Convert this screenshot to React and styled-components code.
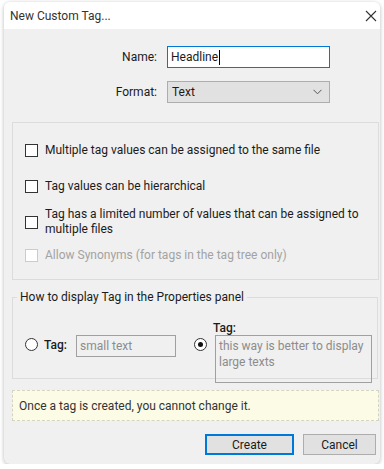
import React from 'react'
import styled, { createGlobalStyle } from 'styled-components'

const GlobalStyle = createGlobalStyle`
  html, body {
    margin: 0;
    background: #ffffff;
  }
  body {
    font-family: Roboto, "Noto Sans", sans-serif;
    font-size: 12px;
    color: #1b1b1b;
  }
`

const Dialog = styled.div`
  width: 376px;
  margin: 2px 0 0 4px;
  border-radius: 6px;
  overflow: hidden;
  background: #f0f0f0;
  box-shadow: 0 1px 4px rgba(0, 0, 0, 0.28);
`

const TitleBar = styled.div`
  height: 27px;
  display: flex;
  align-items: center;
  justify-content: space-between;
  padding: 0 3px 0 6px;
  background: #ffffff;
  color: #333;
`

const Body = styled.div`
  padding: 17px 1px 9px 8px;
`

const FormGrid = styled.div`
  display: grid;
  grid-template-columns: 145px 163px;
  column-gap: 10px;
  row-gap: 13px;
  align-items: center;
`

const Label = styled.label`
  text-align: right;
`

const TextInput = styled.div`
  height: 22px;
  box-sizing: border-box;
  border: 1px solid #0078d7;
  background: #fff;
  display: flex;
  align-items: center;
  padding-left: 3px;
`

const Caret = styled.span`
  display: inline-block;
  width: 1px;
  height: 15px;
  background: #000;
  margin-left: 1px;
`

const Select = styled.div`
  height: 22px;
  box-sizing: border-box;
  border: 1px solid #adadad;
  background: #e1e1e1;
  display: flex;
  align-items: center;
  justify-content: space-between;
  padding: 0 7px 0 4px;
`

const Group = styled.div`
  margin-top: 19px;
  border: 1px solid #dcdcdc;
  padding: 20px 10px 16px 12px;
`

const CheckRow = styled.div`
  display: flex;
  align-items: center;
  gap: 7px;
  line-height: 15px;
  margin-top: ${p => p.$gap || 0}px;
  color: ${p => (p.$disabled ? '#a3a3a3' : '#1b1b1b')};
`

const Box = styled.span`
  flex: none;
  width: 13px;
  height: 13px;
  box-sizing: border-box;
  border: 1px solid ${p => (p.$disabled ? '#cccccc' : '#333333')};
  background: #fff;
`

const Fieldset = styled.fieldset`
  margin: 10px 1px 0 0;
  border: 1px solid #dcdcdc;
  padding: 16px 6px 0 12px;
  min-width: 0;
`

const Legend = styled.legend`
  padding: 0 3px;
  margin-left: -8px;
  line-height: 15px;
`

const OptionsRow = styled.div`
  height: 57px;
  display: flex;
  align-items: flex-start;
`

const Option = styled.div`
  display: flex;
  align-items: flex-start;
  padding-top: ${p => p.$top}px;
  margin-right: ${p => p.$right || 0}px;
`

const Radio = styled.span`
  flex: none;
  width: 13px;
  height: 13px;
  box-sizing: border-box;
  border: 1px solid #333;
  border-radius: 50%;
  background: #fff;
  display: flex;
  align-items: center;
  justify-content: center;
  margin-top: ${p => p.$top || 3}px;
  &::after {
    content: '';
    display: ${p => (p.$checked ? 'block' : 'none')};
    width: 5px;
    height: 5px;
    border-radius: 50%;
    background: #111;
  }
`

const TagLabel = styled.span`
  font-weight: 500;
  margin: ${p => p.$margin};
  line-height: ${p => p.$lh || 20}px;
`

const Stack = styled.div`
  display: flex;
  flex-direction: column;
  margin-left: 8px;
`

const ReadBox = styled.div`
  box-sizing: border-box;
  width: ${p => p.$w}px;
  height: ${p => p.$h}px;
  border: 1px solid #a0a0a0;
  color: #8c8c8c;
  padding: 2px 3px;
  line-height: 16px;
`

const Note = styled.div`
  margin-top: 11px;
  height: 31px;
  box-sizing: border-box;
  border: 1px dashed #d4d4c4;
  background: #fbfbe6;
  display: flex;
  align-items: center;
  padding-left: 6px;
  color: #333;
`

const Buttons = styled.div`
  display: flex;
  justify-content: flex-end;
  gap: 9px;
  margin: 13px 3px 0 0;
`

const Button = styled.button`
  font: inherit;
  color: #1b1b1b;
  height: 21px;
  width: ${p => p.$w}px;
  padding: 0;
  box-sizing: border-box;
  background: #e1e1e1;
  border: ${p => (p.$primary ? '2px solid #0078d7' : '1px solid #adadad')};
`

export default function App() {
  return (
    <>
      <GlobalStyle />
      <Dialog>
        <TitleBar>
          <span>New Custom Tag...</span>
          <svg width="12" height="12" viewBox="0 0 12 12">
            <path d="M1 1 L11 11 M11 1 L1 11" stroke="#333" strokeWidth="1.1" fill="none" />
          </svg>
        </TitleBar>
        <Body>
          <FormGrid>
            <Label>Name:</Label>
            <TextInput>Headline<Caret /></TextInput>
            <Label>Format:</Label>
            <Select>
              <span>Text</span>
              <svg width="9" height="6" viewBox="0 0 9 6">
                <path d="M0.5 0.8 L4.5 4.8 L8.5 0.8" stroke="#555" strokeWidth="1" fill="none" />
              </svg>
            </Select>
          </FormGrid>

          <Group>
            <CheckRow><Box />Multiple tag values can be assigned to the same file</CheckRow>
            <CheckRow $gap={21}><Box />Tag values can be hierarchical</CheckRow>
            <CheckRow $gap={13}><Box />Tag has a limited number of values that can be assigned to multiple files</CheckRow>
            <CheckRow $gap={11} $disabled><Box $disabled />Allow Synonyms (for tags in the tag tree only)</CheckRow>
          </Group>

          <Fieldset>
            <Legend>How to display Tag in the Properties panel</Legend>
            <OptionsRow>
              <Option $top={14} $right={18}>
                <Radio />
                <TagLabel $margin="0 9px 0 6px">Tag:</TagLabel>
                <ReadBox $w={100} $h={22}>small text</ReadBox>
              </Option>
              <Option $top={0}>
                <Radio $checked $top={17} />
                <Stack>
                  <TagLabel $lh={14} $margin="0 0 0 -2px">Tag:</TagLabel>
                  <ReadBox $w={157} $h={48}>this way is better to display large texts</ReadBox>
                </Stack>
              </Option>
            </OptionsRow>
          </Fieldset>

          <Note>Once a tag is created, you cannot change it.</Note>

          <Buttons>
            <Button $primary $w={89}>Create</Button>
            <Button $w={73}>Cancel</Button>
          </Buttons>
        </Body>
      </Dialog>
    </>
  )
}
